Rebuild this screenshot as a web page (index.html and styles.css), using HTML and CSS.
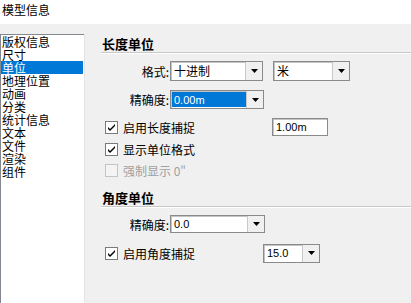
FILE: index.html
```html
<!DOCTYPE html>
<html lang="zh-CN">
<head>
    <meta charset="UTF-8">
    <title>模型信息</title>
    <link rel="stylesheet" href="styles.css">
</head>
<body>

    <div class="titlebar">模型信息</div>

    <div class="main">
        <!-- Category list -->
        <div class="list">
            <div class="list-item">版权信息</div>
            <div class="list-item">尺寸</div>
            <div class="list-item selected">单位</div>
            <div class="list-item">地理位置</div>
            <div class="list-item">动画</div>
            <div class="list-item">分类</div>
            <div class="list-item">统计信息</div>
            <div class="list-item">文本</div>
            <div class="list-item">文件</div>
            <div class="list-item">渲染</div>
            <div class="list-item">组件</div>
        </div>

        <!-- Units panel -->
        <div class="panel">
            <div class="section-title">长度单位</div>

            <div class="row row-format">
                <span class="label">格式:</span>
                <div class="combo combo-format">
                    <span class="combo-text">十进制</span>
                    <span class="combo-btn"><svg width="7" height="4" viewBox="0 0 7 4"><path d="M0 0h7L3.5 4z" fill="#000"/></svg></span>
                </div>
                <div class="combo combo-unit">
                    <span class="combo-text">米</span>
                    <span class="combo-btn"><svg width="7" height="4" viewBox="0 0 7 4"><path d="M0 0h7L3.5 4z" fill="#000"/></svg></span>
                </div>
            </div>

            <div class="row row-precision">
                <span class="label">精确度:</span>
                <div class="combo combo-precision">
                    <span class="combo-text highlighted">0.00m</span>
                    <span class="combo-btn"><svg width="7" height="4" viewBox="0 0 7 4"><path d="M0 0h7L3.5 4z" fill="#000"/></svg></span>
                </div>
            </div>

            <div class="check-row check-snap">
                <span class="checkbox checked"><svg width="9" height="9" viewBox="0 0 9 9"><path d="M1 4l2 2 5-5v2L3 8 1 6z" fill="#000"/></svg></span>
                <span class="check-label">启用长度捕捉</span>
                <div class="textbox">1.00m</div>
            </div>

            <div class="check-row check-show">
                <span class="checkbox checked"><svg width="9" height="9" viewBox="0 0 9 9"><path d="M1 4l2 2 5-5v2L3 8 1 6z" fill="#000"/></svg></span>
                <span class="check-label">显示单位格式</span>
            </div>

            <div class="check-row check-force disabled">
                <span class="checkbox"></span>
                <span class="check-label">强制显示 0"</span>
            </div>

            <div class="section-title section-angle">角度单位</div>

            <div class="row row-angle-precision">
                <span class="label">精确度:</span>
                <div class="combo combo-angle">
                    <span class="combo-text">0.0</span>
                    <span class="combo-btn"><svg width="7" height="4" viewBox="0 0 7 4"><path d="M0 0h7L3.5 4z" fill="#000"/></svg></span>
                </div>
            </div>

            <div class="check-row check-angle">
                <span class="checkbox checked"><svg width="9" height="9" viewBox="0 0 9 9"><path d="M1 4l2 2 5-5v2L3 8 1 6z" fill="#000"/></svg></span>
                <span class="check-label">启用角度捕捉</span>
                <div class="combo combo-snap">
                    <span class="combo-text">15.0</span>
                    <span class="combo-btn"><svg width="7" height="4" viewBox="0 0 7 4"><path d="M0 0h7L3.5 4z" fill="#000"/></svg></span>
                </div>
            </div>
        </div>
    </div>

</body>
</html>
```

FILE: styles.css
```css
body {
    margin: 0;
    width: 411px;
    height: 303px;
    overflow: hidden;
    background-color: #f0f0f0;
    font-family: "Noto Sans CJK SC", "Liberation Sans", sans-serif;
    font-size: 12px;
    color: #000;
}

.titlebar {
    height: 24px;
    line-height: 20px;
    padding-left: 2px;
    background-color: #fff;
}

.main {
    display: flex;
    margin-top: 10px;
    height: 269px;
}

/* left list */
.list {
    width: 84px;
    background-color: #fff;
    border-top: 1px solid #828790;
    border-left: 1px solid #828790;
    box-sizing: border-box;
}

.list-item {
    height: 13px;
    line-height: 13px;
    padding-left: 1px;
    width: 82px;
    box-sizing: border-box;
}

.list-item.selected {
    background-color: #0078d7;
    color: #fff;
}

/* right panel */
.panel {
    flex: 1;
    border-left: 1px solid #e3e3e3;
    height: 267px;
}

.section-title {
    margin-left: 16px;
    padding-left: 1px;
    padding-top: 1px;
    height: 17px;
    line-height: 17px;
    font-size: 13px;
    font-weight: bold;
    border-bottom: 1px solid #c8c8c8;
    box-shadow: 0 1px 0 #fff;
}

.section-angle {
    margin-top: 8px;
    padding-top: 2px;
}

.row {
    display: flex;
    align-items: center;
}

.label {
    width: 84px;
    text-align: right;
    padding-right: 1px;
}

.row-format { margin-top: 8px; }
.row-precision { margin-top: 9px; }
.row-angle-precision { margin-top: 8px; }

/* combo box */
.combo {
    display: flex;
    height: 20px;
    box-sizing: border-box;
    border: 1px solid #8a8a8a;
    box-shadow: inset 1px 1px 0 #c4c4c4;
    background-color: #fff;
}

.combo-text {
    flex: 1;
    margin: 1px 0 1px 1px;
    padding-left: 2px;
    line-height: 16px;
}

.combo-text.highlighted {
    background-color: #0078d7;
    color: #fff;
    font-family: "Liberation Sans", sans-serif;
    font-size: 11px;
}

.combo-btn {
    width: 16px;
    display: flex;
    align-items: center;
    justify-content: center;
    background-color: #f0f0f0;
    border-left: 1px solid #c8c8c8;
}

.combo-format { width: 93px; }
.combo-unit { width: 77px; margin-left: 10px; }
.combo-precision { width: 94px; height: 19px; }
.combo-angle { width: 95px; height: 18px; }
.combo-snap { width: 57px; height: 19px; margin-left: 46px; }

.combo-angle .combo-text,
.combo-snap .combo-text {
    font-family: "Liberation Sans", sans-serif;
    font-size: 11px;
    line-height: 14px;
}

/* check rows */
.check-row {
    display: flex;
    align-items: center;
    height: 18px;
    padding-left: 20px;
}

.check-snap { margin-top: 9px; }
.check-show { margin-top: 4px; }
.check-force { margin-top: 3px; }
.check-angle { margin-top: 11px; }

.checkbox {
    width: 11px;
    height: 11px;
    border: 1px solid #7a7a7a;
    background-color: #fff;
    display: flex;
    align-items: center;
    justify-content: center;
}

.check-label {
    margin-left: 5px;
    width: 149px;
}

.check-angle .check-label {
    width: 94px;
}

.disabled .checkbox {
    border-color: #c4c4c4;
    background-color: #f4f4f4;
}

.disabled .check-label {
    color: #a0a0a0;
}

.textbox {
    width: 56px;
    height: 18px;
    box-sizing: border-box;
    border: 1px solid #8a8a8a;
    box-shadow: inset 1px 1px 0 #c4c4c4;
    background-color: #fff;
    padding-left: 3px;
    line-height: 16px;
    font-family: "Liberation Sans", sans-serif;
    font-size: 11px;
}
```
